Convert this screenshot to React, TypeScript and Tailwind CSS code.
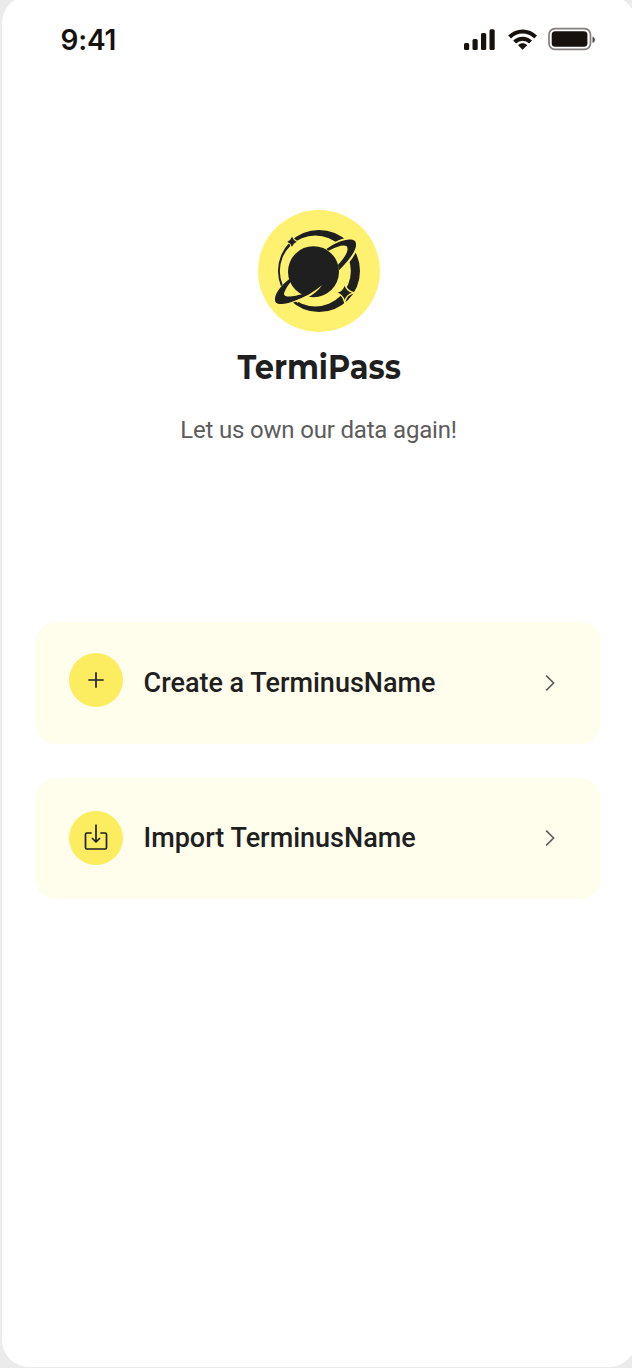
const Chevron = () => (
  <svg className="h-5 w-5" viewBox="0 0 20 20" fill="none" stroke="#5c5c5c" strokeWidth="1.6">
    <path d="M6.2 2.6 L13.6 10 L6.2 17.4" />
  </svg>
);

const Logo = () => (
  <svg className="h-[122px] w-[122px]" viewBox="24 30 366 366">
    <circle cx="207" cy="213" r="183" fill="#fdf16f" />
    <path
      fillRule="evenodd"
      fill="#1f1f1f"
      d="M84 213 a123 123 0 1 0 246 0 a123 123 0 1 0 -246 0 Z M89.500 213 a106.500 106.500 0 1 1 213 0 a106.500 106.500 0 1 1 -213 0 Z"
    />
    <path
      fill="#fdf16f"
      d="M224 145 C260 118 300 106 321 116 C331 130 320 160 298 187 L268 218 L250 150 Z M126 228 C85 262 66 290 70 307 C75 321 105 319 132 307 L190 290 Z"
    />
    <circle cx="190.500" cy="215" r="76.500" fill="#1f1f1f" />
    <path
      fill="#1f1f1f"
      fillRule="evenodd"
      d="M229 147 C262 123 299 112 314 122 C327 137 310 168 267 211 L264 194 C284 174 299 150 290 139 C281 133 260 140 236 152 Z"
    />
    <path
      fill="#1f1f1f"
      d="M123 233 C88 258 70 288 76 305 C82 317 110 313 139 301 C166 291 191 277 216 256 C184 275 156 284 138 287 C108 293 96 288 105 273 C109 264 115 254 124 244 Z"
    />
    <path
      fill="#fdf16f"
      d="M216 256 C191 277 165 291 136 302 L142 308 C155 303 166 297 176 291 C191 283 205 272 216 256 Z"
    />
    <path
      fill="#1f1f1f"
      stroke="#fdf16f"
      strokeWidth="6"
      paintOrder="stroke"
      d="M126 110 Q130 121 140 125 Q130 129 126 140 Q122 129 112 125 Q122 121 126 110 Z"
    />
    <path
      fill="#1f1f1f"
      stroke="#fdf16f"
      strokeWidth="8"
      paintOrder="stroke"
      d="M284 257 Q289 273 306 278 Q289 283 284 300 Q279 283 263 278 Q279 273 284 257 Z"
    />
  </svg>
);

const StatusIcons = () => (
  <svg className="h-[30px] w-[136px]" viewBox="460 25 136 30" fill="#18120e">
    <rect x="464" y="43" width="5.200" height="7" rx="1.500" />
    <rect x="472.500" y="39" width="5.200" height="11" rx="1.500" />
    <rect x="481" y="33" width="5.200" height="17" rx="1.500" />
    <rect x="489.500" y="29.300" width="5.200" height="20.700" rx="1.500" />
    <g fill="none" stroke="#18120e" strokeWidth="4">
      <path d="M509.600 37 C517 29.600 528.200 29.600 535.600 37" />
      <path d="M514.600 42 C519 37.600 526.200 37.600 530.600 42" />
    </g>
    <path d="M522.600 49.800 L518.100 45.200 C520.600 42.600 524.600 42.600 527.100 45.200 Z" />
    <rect x="549" y="28.700" width="41.500" height="20.700" rx="6" fill="none" stroke="#827e7b" strokeWidth="1.700" />
    <rect x="551.700" y="31.200" width="35.700" height="15.500" rx="3.500" />
    <path d="M592.500 36.500 Q595 37.500 595 39.500 Q595 42 592.500 43 Z" fill="#4f4a47" />
  </svg>
);

const Plus = () => (
  <svg className="h-[54px] w-[54px]" viewBox="0 0 54 54" fill="none" stroke="#1f1f1f" strokeWidth="1.700">
    <path d="M27 19.300 V34.700 M19.300 27 H34.700" />
  </svg>
);

const Import = () => (
  <svg
    className="h-[54px] w-[54px]"
    viewBox="0 0 54 54"
    fill="none"
    stroke="#1f1f1f"
    strokeWidth="1.700"
    strokeLinejoin="round"
  >
    <path d="M22.700 22 H18 Q16.500 22 16.500 23.500 V36.500 Q16.500 38 18 38 H36 Q37.500 38 37.500 36.500 V23.500 Q37.500 22 36 22 H31.300 M27 13.500 V31 M23 27 L27 31 L31 27" />
  </svg>
);

export default function App() {
  return (
    <div className="h-[1368px] w-full overflow-hidden bg-[#ebebeb] font-['Roboto',sans-serif]">
      <main className="-mt-1 ml-[1.5px] flex h-[1371px] w-[634.5px] flex-col rounded-[27px] bg-white">
        <header className="flex h-[87px] justify-between pt-[29px] pr-[40px] pl-[59px]">
          <span className="-mt-px font-['Inter',sans-serif] text-[28px] leading-[32px] font-semibold tracking-[-0.2px] text-[#18120e]">
            9:41
          </span>
          <StatusIcons />
        </header>
        <section className="flex h-[539px] w-[634px] flex-col items-center pt-[127px]">
          <Logo />
          <h1 className="mt-[15px] ml-[2px] scale-x-[0.895] text-[34px] leading-[40px] font-bold font-['Montserrat','Inter',sans-serif] text-[#1f1f1f]">
            TermiPass
          </h1>
          <p className="mt-[29px] text-[24px] leading-[28px] tracking-[-0.18px] text-[#5c5c5c]">Let us own our data again!</p>
        </section>
        <nav className="flex w-[601px] flex-col gap-[34px] pl-[33.5px]">
          <button className="flex h-[121.5px] w-[566px] items-center rounded-[21px] bg-[#fffdec] pr-[41.5px] pl-[33.5px] text-left">
            <span className="mb-[6px] h-[54px] w-[54px] rounded-full bg-[#fcec60]"><Plus /></span>
            <span className="ml-[21px] flex-1 text-[27px] leading-8 font-medium text-[#1f1f1f]">Create a TerminusName</span>
            <Chevron />
          </button>
          <button className="flex h-[121.5px] w-[566px] items-center rounded-[21px] bg-[#fffdec] pr-[41.5px] pl-[33.5px] text-left">
            <span className="h-[54px] w-[54px] rounded-full bg-[#fcec60]"><Import /></span>
            <span className="ml-[21px] flex-1 text-[27px] leading-8 font-medium text-[#1f1f1f]">Import TerminusName</span>
            <Chevron />
          </button>
        </nav>
      </main>
    </div>
  );
}
